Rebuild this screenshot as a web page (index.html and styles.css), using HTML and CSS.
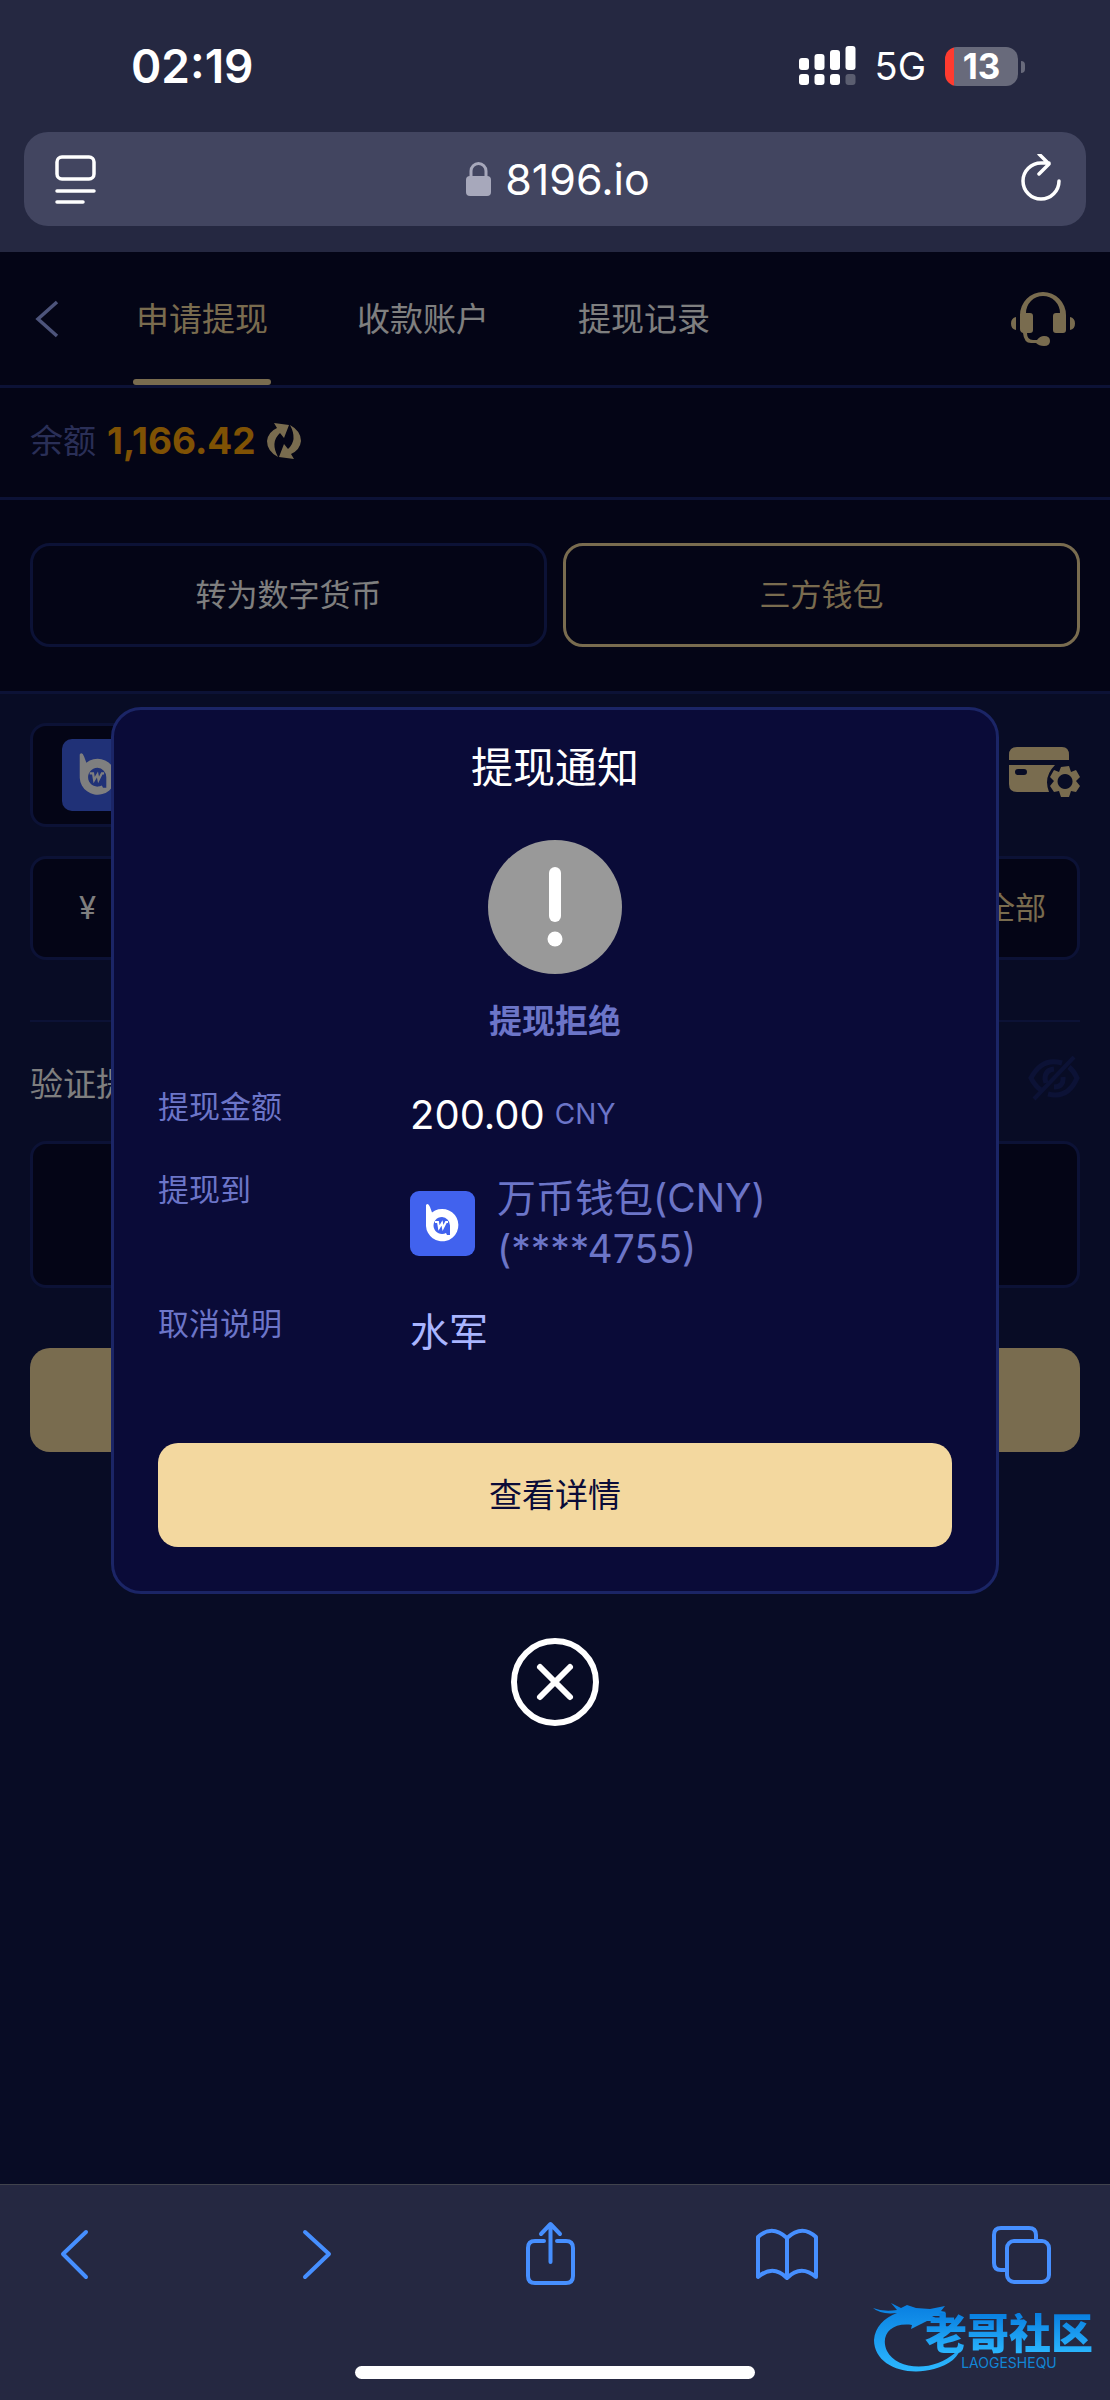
FILE: index.html
```html
<!DOCTYPE html>
<html lang="zh-CN">
<head>
<meta charset="utf-8">
<meta name="viewport" content="width=device-width, initial-scale=1">
<title>申请提现</title>
<link rel="stylesheet" href="styles.css">
</head>
<body>
<svg width="0" height="0" class="defs" aria-hidden="true">
  <symbol id="wallet" viewBox="0 0 65 65">
    <rect width="65" height="65" rx="9" fill="#4162ee"/>
    <path d="M16 14Q18 11 20 16L22 21.500A16.200 16.200 0 1 1 16 35Z" fill="#fff"/>
    <path d="M32 26a8.500 8.500 0 1 0 4 16l1 2h3V34.500A8.500 8.500 0 0 0 32 26Z" fill="#4162ee"/>
    <path d="M25 31h3l1 6 3-5 1 5 3-6h2" fill="none" stroke="#fff" stroke-width="2"/>
  </symbol>
</svg>
<div class="page">
  <div class="chrome">
    <div class="status">
      <time class="clock">02:19</time>
      <div class="signals">
        <svg width="57" height="40" viewBox="0 0 57 40" fill="#fff" aria-hidden="true">
          <rect y="12" width="10" height="12" rx="3"/><rect x="15.500" y="8" width="10" height="16" rx="3"/><rect x="31" y="4" width="10" height="20" rx="3"/><rect x="46.500" width="10" height="24" rx="3"/>
          <rect y="28" width="10" height="11" rx="3"/><rect x="15.500" y="28" width="10" height="11" rx="3"/><rect x="31" y="28" width="10" height="11" rx="3"/><rect x="46.500" y="28" width="10" height="11" rx="3" opacity=".25"/>
        </svg>
        <span class="network">5G</span>
        <span class="battery">13</span>
      </div>
    </div>
    <div class="address">
      <button class="plain" aria-label="页面菜单">
        <svg width="42" height="50" viewBox="0 0 42 50" fill="none" stroke="#fff" stroke-width="3.500" stroke-linecap="round"><rect x="3" y="3" width="37" height="22" rx="5"/><path d="M3 37h37M3 48h26"/></svg>
      </button>
      <div class="host">
        <svg width="25" height="34" viewBox="0 0 25 34" aria-hidden="true"><rect y="14" width="25" height="20" rx="4" fill="#a7a8bb"/><path d="M5 16V9a7.500 7.500 0 0 1 15 0v7" fill="none" stroke="#a7a8bb" stroke-width="3"/></svg>
        <span>8196.io</span>
      </div>
      <button class="plain" aria-label="刷新">
        <svg width="42" height="50" viewBox="0 0 42 50" fill="none" stroke="#fff" stroke-width="3.500" stroke-linecap="round" stroke-linejoin="round"><path d="M39 27A18 18 0 1 1 21 9h8M19 0l10 10-10 10"/></svg>
      </button>
    </div>
  </div>

  <main class="content">
    <header class="topbar">
      <button class="plain" aria-label="返回"><svg width="24" height="38" viewBox="0 0 24 38" fill="none" stroke="#9aa9f6" stroke-width="3.500"><path d="M22 2 3 19l19 17"/></svg></button>
      <nav class="tabs">
        <a href="#withdraw" class="tab active">申请提现</a>
        <a href="#accounts" class="tab">收款账户</a>
        <a href="#records" class="tab">提现记录</a>
      </nav>
      <button class="plain service" aria-label="客服">
        <svg width="64" height="56" viewBox="0 0 64 56" fill="#f3d89f"><path d="M9 38V24a23 23 0 0 1 46 0v15q0 3-3 3H45q-3 0-3-3V25q0-3 3-3h4a17 17 0 0 0-34 0h4q3 0 3 3v14q0 3-3 3h-3q0 7 6 7h4q3-4 7-4 6 0 6 5t-6 5q-5 0-8-3h-5Q13 52 12 42 9 41 9 38ZM5 26v13q-5-1-5-6.500T5 26Zm54 0v13q5-1 5-6.500T59 26Z"/></svg>
      </button>
    </header>
    <section class="balance">
      <span class="balance-label">余额</span>
      <strong class="amount">1,166.42</strong>
      <button class="plain" aria-label="刷新余额"><svg width="34" height="36" viewBox="0 0 34 36" fill="#f3d89f"><path id="turn" d="M7 0 22 2 17 15 13 10Q3 19 11 34 0 28 0 18 1 9 10 5Z"/><use href="#turn" transform="rotate(180 17 18)"/></svg></button>
    </section>
    <section class="methods">
      <button class="method">转为数字货币</button>
      <button class="method selected">三方钱包</button>
    </section>
    <form class="form">
      <div class="account-row">
        <button type="button" class="field account" aria-label="选择钱包"><svg width="72" height="72"><use href="#wallet"/></svg></button>
        <button type="button" class="plain" aria-label="管理账户">
          <svg width="71" height="56" viewBox="0 0 71 56" fill="#f3d89f"><path d="M0 13V8q0-8 8-8h45q7 0 7 8v5ZM0 18h46q-12 12-6 27H8q-8 0-8-8Zm9 4a3 3 0 0 0 0 6h6a3 3 0 0 0 0-6Z" fill-rule="evenodd"/><path d="m52 20 8-1 2 6 5-2 4 7-4 4 4 5-4 6-5-1-2 6h-8l-2-6-5 1-4-6 4-5-4-4 4-7 5 2Zm4 7a7.500 7.500 0 1 0 .1 0Z" fill-rule="evenodd"/></svg>
        </button>
      </div>
      <div class="field amount-field">
        <label for="sum">¥</label>
        <input id="sum" type="text" inputmode="decimal">
        <button type="button" class="plain all">全部</button>
      </div>
      <hr>
      <div class="label-row">
        <label for="pin">验证提</label>
        <button type="button" class="plain" aria-label="显示密码"><svg width="52" height="56" viewBox="0 0 52 56" fill="none" stroke="#18246c" stroke-width="5"><path d="M34 7Q14 1 3 22q4 8 10 12M20 38q20 5 29-16-3-7-8-11M26 13q-9 1-9 10l1 4M35 21q1 10-9 10"/><path d="M46 1 6 43" stroke-width="4"/></svg></button>
      </div>
      <input class="field pin" id="pin" type="password">
      <button type="button" class="submit" aria-label="提交"></button>
    </form>

    <div class="overlay">
      <div class="dialog" role="dialog" aria-modal="true" aria-labelledby="dialog-title">
        <h1 id="dialog-title">提现通知</h1>
        <svg class="alert" width="134" height="134" viewBox="0 0 134 134" aria-hidden="true"><circle cx="67" cy="67" r="67" fill="#999"/><path d="M67 33v43" stroke="#fff" stroke-width="12" stroke-linecap="round"/><circle cx="67" cy="99" r="7.500" fill="#fff"/></svg>
        <h2>提现拒绝</h2>
        <dl class="details">
          <dt>提现金额</dt>
          <dd class="sum"><span>200.00</span><small>CNY</small></dd>
          <dt>提现到</dt>
          <dd class="target"><svg width="65" height="65" aria-hidden="true"><use href="#wallet"/></svg><span>万币钱包(CNY)<br>(****4755)</span></dd>
          <dt>取消说明</dt>
          <dd class="reason">水军</dd>
        </dl>
        <button class="details-button">查看详情</button>
      </div>
      <button class="plain" aria-label="关闭"><svg width="88" height="88" viewBox="0 0 88 88" fill="none" stroke="#fff" stroke-width="6" stroke-linecap="round"><circle cx="44" cy="44" r="41"/><path d="m29 29 30 30m0-30L29 59"/></svg></button>
    </div>
  </main>

  <footer class="bottom">
    <nav class="tools">
      <button class="plain" aria-label="后退"><svg width="60" height="64" viewBox="0 0 60 64"><path d="M42 10 19 32l23 23"/></svg></button>
      <button class="plain" aria-label="前进"><svg width="60" height="64" viewBox="0 0 60 64"><path d="m24 10 24 22-24 23"/></svg></button>
      <button class="plain" aria-label="分享"><svg width="60" height="64" viewBox="0 0 60 64"><path d="M26 19h-9q-7 0-7 7v28q0 7 7 7h31q7 0 7-7V26q0-7-7-7h-9M32.500 40V3M23 12l9.500-10L42 12"/></svg></button>
      <button class="plain" aria-label="书签"><svg width="60" height="64" viewBox="0 0 60 64"><path d="M33 16v40Q19 42 4 55V15q14-13 29 1 15-14 29-1v40Q47 42 33 56"/></svg></button>
      <button class="plain" aria-label="标签页"><svg width="60" height="64" viewBox="0 0 60 64"><rect x="16" y="19" width="42" height="41" rx="7"/><path d="M16 48h-6q-7 0-7-7V13q0-7 7-7h28q7 0 7 7v6"/></svg></button>
    </nav>
    <div class="home"></div>
    <div class="watermark">
      <svg width="92" height="76" viewBox="0 0 92 76" aria-hidden="true">
        <defs><linearGradient id="sea" x1="0" y1="0" x2="0" y2="1"><stop offset="0" stop-color="#087ee0"/><stop offset="1" stop-color="#2cb8ff"/></linearGradient></defs>
        <path d="M0 10q10 4 24 2L18 5l10 5 6-3 9 3 14 1 15-3-4 5 5 1-5 4-9 0 9 5-14 0-6 3-10 5 1-4C17 24 7 38 14 53c7 14 30 20 51 12 13-5 21-13 24-19-2 13-13 21-28 25C32 79 1 67 1 42 2 29 11 20 24 15Q8 17 0 10Z" fill="url(#sea)"/>
      </svg>
      <div class="brand"><span class="brand-name">老哥社区</span><span class="brand-latin">LAOGESHEQU</span></div>
    </div>
  </footer>
</div>
</body>
</html>
```
FILE: styles.css
```css
* { box-sizing: border-box; }

body {
  margin: 0;
  background: #252841;
  color: #fff;
  font-family: Inter, "Noto Sans CJK SC", sans-serif;
  font-size: 33px;
  line-height: 48px;
}

button, input { font: inherit; color: inherit; }
button { padding: 0; cursor: pointer; }
h1, h2, dl, dd { margin: 0; }
svg { display: block; flex: none; }
.defs { position: absolute; }
.plain { border: 0; background: none; flex: none; }

.page {
  min-height: 100vh;
  display: flex;
  flex-direction: column;
}

/* Browser chrome */
.chrome { padding: 0 24px 26px; }
.status {
  height: 132px;
  display: flex;
  justify-content: space-between;
  align-items: center;
  padding: 0 68px 0 107px;
}
.clock { font-size: 46px; font-weight: 600; }
.signals { display: flex; align-items: center; }
.network { font-size: 38px; margin: 0 19px; }
.battery {
  position: relative;
  width: 73px;
  height: 39px;
  border-radius: 12px;
  background: linear-gradient(90deg, #ff3b30 9px, #686a7b 9px);
  font-size: 35px;
  font-weight: 700;
  line-height: 39px;
  text-align: center;
}
.battery::after {
  content: "";
  position: absolute;
  left: 76px;
  top: 14px;
  width: 4px;
  height: 12px;
  border-radius: 0 6px 6px 0;
  background: #686a7b;
}
.address {
  height: 94px;
  padding: 0 24px 0 30px;
  display: flex;
  align-items: center;
  justify-content: space-between;
  border-radius: 24px;
  background: #424560;
}
.host { display: flex; align-items: center; gap: 14px; font-size: 43px; }

/* Page behind the dialog */
.content {
  position: relative;
  flex: 1;
  background: #10184a;
}
.topbar, .balance, .methods {
  background: #080a2c;
  border-bottom: 3px solid #18246c;
}
.topbar {
  display: flex;
  align-items: center;
  height: 136px;
  padding: 0 35px;
}
.tabs { display: flex; gap: 83px; margin-left: 74px; align-self: stretch; }
.tab {
  position: relative;
  padding: 43px 3px 0;
  color: #fff;
  text-decoration: none;
}
.tab.active { color: #f3d89f; }
.tab.active::after {
  content: "";
  position: absolute;
  left: 0;
  right: 0;
  bottom: 0;
  height: 6px;
  border-radius: 3px;
  background: #f3d89f;
}
.service { margin-left: auto; }
.balance {
  display: flex;
  align-items: center;
  height: 112px;
  padding: 0 30px 4px;
}
.balance-label { color: #555fae; }
.amount { margin: 0 11px; color: #ffa408; font-size: 37px; font-weight: 700; }
.methods {
  display: grid;
  grid-template-columns: 1fr 1fr;
  gap: 16px;
  padding: 43px 30px 44px;
}
.method {
  height: 104px;
  border: 3px solid #18246c;
  border-radius: 20px;
  background: none;
  font-size: 31px;
}
.method.selected { border-color: #f3d89f; color: #f3d89f; }

.form { padding: 29px 30px 60px; }
.field {
  width: 100%;
  border: 3px solid #18246c;
  border-radius: 16px;
  background: #080a2c;
}
.account-row { display: flex; align-items: center; gap: 30px; }
.account { flex: 1; height: 104px; padding: 0 29px; }
.amount-field {
  display: flex;
  align-items: center;
  height: 104px;
  margin-top: 29px;
  padding: 0 31px 0 46px;
  font-size: 31px;
}
.amount-field input { flex: 1; min-width: 0; border: 0; background: none; }
.all { color: #f3d89f; }
hr { margin: 60px 0 34px; border: 0; border-top: 2px solid #18246c; }
.label-row { display: flex; justify-content: space-between; align-items: center; }
.pin { display: block; height: 147px; margin-top: 29px; padding: 0 30px; }
.submit {
  display: block;
  width: 100%;
  height: 104px;
  margin-top: 60px;
  border: 0;
  border-radius: 20px;
  background: #f3d89f;
}

/* Dialog */
.overlay {
  position: absolute;
  inset: 0;
  display: flex;
  flex-direction: column;
  align-items: center;
  justify-content: center;
  gap: 44px;
  padding-bottom: 3px;
  background: rgba(0, 0, 0, .5);
}
.dialog {
  width: 80%;
  padding: 28px 44px 44px;
  border: 3px solid #1b2566;
  border-radius: 30px;
  background: #0a0b38;
}
.dialog h1 { font-size: 42px; font-weight: 400; line-height: 60px; text-align: center; }
.alert { margin: 42px auto 23px; }
.dialog h2 { font-size: 33px; font-weight: 700; text-align: center; color: #6c75c8; }
.details {
  display: grid;
  grid-template-columns: 252px 1fr;
  row-gap: 26px;
  margin-top: 38px;
  color: #6c75c8;
}
.details dt { font-size: 31px; }
.details dd { padding-top: 6px; font-size: 39px; line-height: 51px; }
.sum { display: flex; align-items: center; gap: 10px; }
.sum span { color: #fff; font-size: 40px; }
.sum small { font-size: 28px; }
.target { display: flex; align-items: center; gap: 22px; }
.details .reason { color: #a9b5ff; }
.details-button {
  width: 100%;
  height: 104px;
  margin-top: 86px;
  display: block;
  border: 0;
  border-radius: 20px;
  background: #f3d89f;
  color: #0a0b38;
}

/* Bottom toolbar */
.bottom {
  position: relative;
  padding: 37px 0 21px;
  border-top: 1px solid #41434d;
}
.tools {
  display: flex;
  justify-content: space-between;
  padding: 0 59px 0 44px;
}
.tools svg {
  overflow: visible;
  fill: none;
  stroke: #468fff;
  stroke-width: 4;
  stroke-linecap: round;
  stroke-linejoin: round;
}
.home {
  width: 36%;
  height: 13px;
  margin: 80px auto 0;
  border-radius: 7px;
  background: #fff;
}
.watermark {
  position: absolute;
  right: 17px;
  bottom: 26px;
  display: flex;
  align-items: flex-end;
}
.watermark svg { margin-right: -40px; }
.brand {
  display: flex;
  flex-direction: column;
  align-items: center;
  padding-bottom: 3px;
  color: #1286d6;
}
.brand-name {
  font-size: 42px;
  font-weight: 900;
  line-height: 42px;
  background: linear-gradient(#087ee0, #2cb8ff);
  background-clip: text;
  color: transparent;
}
.brand-latin { font-size: 14px; line-height: 16px; }
```
